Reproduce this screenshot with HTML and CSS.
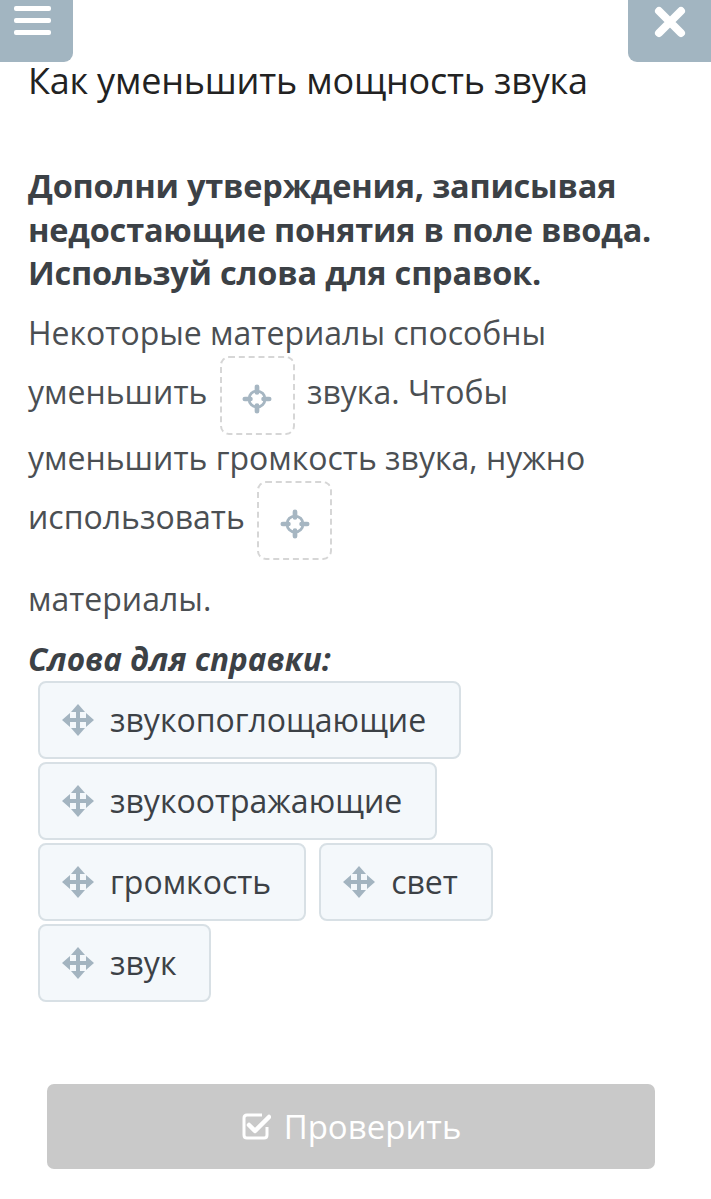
FILE: index.html
```html
<!DOCTYPE html>
<html lang="ru">
<head>
<meta charset="utf-8">
<link rel="stylesheet" href="styles.css">
</head>
<body>
<button class="corner corner-left" aria-label="Меню">
  <span class="bar"></span><span class="bar"></span><span class="bar"></span>
</button>
<button class="corner corner-right" aria-label="Закрыть">
  <svg width="32" height="32" viewBox="0 0 32 32"><path d="M5 5 L27 27 M27 5 L5 27" stroke="#fff" stroke-width="8" stroke-linecap="round"/></svg>
</button>
<main class="page">
  <h1 class="title">Как уменьшить мощность звука</h1>
  <p class="task">Дополни утверждения, записывая недостающие понятия в поле ввода. Используй слова для справок.</p>
  <div class="text">
    <p class="flow">Некоторые материалы способны уменьшить <span class="drop"><svg class="target" viewBox="0 0 32 32"><circle cx="16" cy="16" r="8.5" fill="none" stroke="currentColor" stroke-width="3"/><path d="M16 3 V9 M16 23 V29 M3 16 H9 M23 16 H29" stroke="currentColor" stroke-width="5" stroke-linecap="round"/></svg></span> звука. Чтобы уменьшить громкость звука, нужно использовать <span class="drop"><svg class="target" viewBox="0 0 32 32"><circle cx="16" cy="16" r="8.5" fill="none" stroke="currentColor" stroke-width="3"/><path d="M16 3 V9 M16 23 V29 M3 16 H9 M23 16 H29" stroke="currentColor" stroke-width="5" stroke-linecap="round"/></svg></span></p>
    <p class="tail">материалы.</p>
  </div>
  <h2 class="words-title">Слова для справки:</h2>
  <div class="chips">
    <span class="chip"><svg class="move" viewBox="0 0 32 32"><path d="M16 3 V29 M3 16 H29" stroke="currentColor" stroke-width="4"/><path d="M16 0 L23 8 H9 Z M16 32 L23 24 H9 Z M0 16 L8 9 V23 Z M32 16 L24 9 V23 Z" fill="currentColor"/></svg>звукопоглощающие</span>
    <span class="chip"><svg class="move" viewBox="0 0 32 32"><path d="M16 3 V29 M3 16 H29" stroke="currentColor" stroke-width="4"/><path d="M16 0 L23 8 H9 Z M16 32 L23 24 H9 Z M0 16 L8 9 V23 Z M32 16 L24 9 V23 Z" fill="currentColor"/></svg>звукоотражающие</span>
    <span class="chip"><svg class="move" viewBox="0 0 32 32"><path d="M16 3 V29 M3 16 H29" stroke="currentColor" stroke-width="4"/><path d="M16 0 L23 8 H9 Z M16 32 L23 24 H9 Z M0 16 L8 9 V23 Z M32 16 L24 9 V23 Z" fill="currentColor"/></svg>громкость</span>
    <span class="chip"><svg class="move" viewBox="0 0 32 32"><path d="M16 3 V29 M3 16 H29" stroke="currentColor" stroke-width="4"/><path d="M16 0 L23 8 H9 Z M16 32 L23 24 H9 Z M0 16 L8 9 V23 Z M32 16 L24 9 V23 Z" fill="currentColor"/></svg>свет</span>
    <span class="chip"><svg class="move" viewBox="0 0 32 32"><path d="M16 3 V29 M3 16 H29" stroke="currentColor" stroke-width="4"/><path d="M16 0 L23 8 H9 Z M16 32 L23 24 H9 Z M0 16 L8 9 V23 Z M32 16 L24 9 V23 Z" fill="currentColor"/></svg>звук</span>
  </div>
  <div class="actions">
    <button class="check"><svg class="check-icon" viewBox="0 0 30 30"><path d="M21 4 H6 Q3 4 3 7 V24 Q3 27 6 27 H23 Q26 27 26 24 V16" fill="none" stroke="#fff" stroke-width="3"/><path d="M8 14 L14 20 L28 6" fill="none" stroke="#fff" stroke-width="4.5" stroke-linecap="round" stroke-linejoin="round"/></svg>Проверить</button>
  </div>
</main>
</body>
</html>
```
FILE: styles.css
```css
* { box-sizing: border-box; }
html, body { margin: 0; padding: 0; background: #fff; }
body {
  font-family: "Open Sans", "Noto Sans", sans-serif;
  color: #3c4146;
  width: 711px;
  position: relative;
}
.corner {
  position: absolute;
  top: 0;
  height: 62px;
  border: none;
  background: #a2b5c1;
  padding: 0;
  display: flex;
  align-items: center;
  justify-content: center;
}
.corner-left {
  left: 0;
  width: 73px;
  border-radius: 0 0 9px 0;
  flex-direction: column;
  justify-content: flex-start;
  align-items: flex-start;
  padding: 6px 0 0 14px;
  gap: 7px;
}
.bar {
  display: block;
  width: 37px;
  height: 5px;
  background: #fff;
  border-radius: 2px;
}
.corner-right {
  right: 0;
  width: 83px;
  border-radius: 0 0 0 9px;
  align-items: flex-start;
  padding-top: 6px;
}
.page {
  padding: 56px 28px 30px 28px;
}
.title {
  margin: 0;
  font-size: 36px;
  font-weight: 400;
  line-height: 50px;
  color: #222;
  letter-spacing: -0.2px;
}
.task {
  margin: 58px 0 0 0;
  font-size: 32.5px;
  font-weight: 700;
  line-height: 43.5px;
  color: #3c4146;
  letter-spacing: -0.2px;
}
.text {
  margin-top: 16px;
  font-size: 32px;
  color: #4b4f53;
}
.flow {
  margin: 0;
  line-height: 44px;
  width: 625px;
}
.drop {
  display: inline-block;
  width: 75px;
  height: 79px;
  margin: 1px 4px;
  border: 2px dashed #d6d6d6;
  border-radius: 9px;
  vertical-align: middle;
  color: #a6b6c2;
  text-align: center;
  line-height: 75px;
}
.target {
  width: 30px;
  height: 30px;
  vertical-align: middle;
}
.tail {
  margin: 16px 0 0 0;
  line-height: 44px;
}
.words-title {
  margin: 16px 0 0 0;
  font-size: 31.5px;
  font-weight: 700;
  font-style: italic;
  line-height: 44px;
  color: #3c4146;
}
.chips {
  display: flex;
  flex-wrap: wrap;
  column-gap: 13px;
  row-gap: 3px;
  margin: 0 0 0 10px;
  width: 470px;
}
.chip {
  display: inline-flex;
  align-items: center;
  height: 78px;
  padding: 0 33px 0 22px;
  background: #f4f8fb;
  border: 2px solid #d8e0e5;
  border-radius: 8px;
  font-size: 32px;
  color: #3c4146;
}
.move {
  width: 32px;
  height: 32px;
  color: #a3b4c0;
  margin-right: 16px;
}
.actions {
  margin-top: 82px;
  padding: 0 28px 0 19px;
}
.check {
  width: 608px;
  height: 85px;
  border: none;
  border-radius: 7px;
  background: #c9c9c9;
  color: #fff;
  font-family: "Open Sans", "Noto Sans", sans-serif;
  font-size: 33px;
  display: flex;
  align-items: center;
  justify-content: center;
  padding: 0;
}
.check-icon {
  width: 30px;
  height: 30px;
  margin-right: 13px;
}
```
